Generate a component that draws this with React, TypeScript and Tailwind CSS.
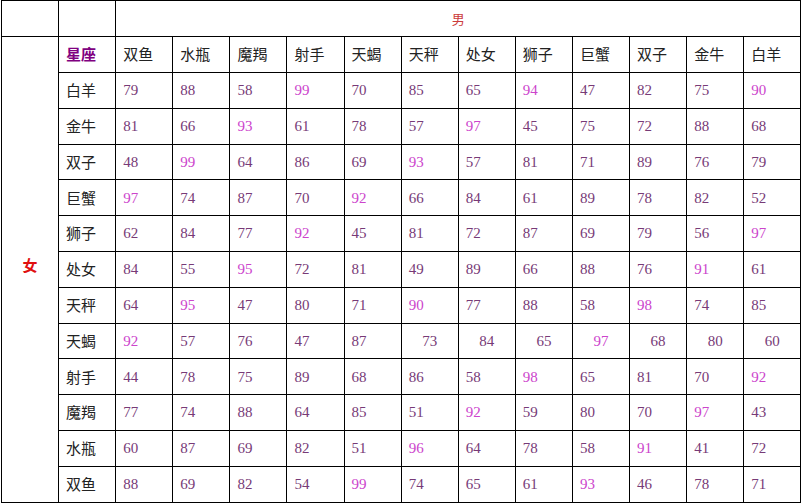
import React from "react";

const signs = ["白羊", "金牛", "双子", "巨蟹", "狮子", "处女", "天秤", "天蝎", "射手", "魔羯", "水瓶", "双鱼"];
const males = ["双鱼", "水瓶", "魔羯", "射手", "天蝎", "天秤", "处女", "狮子", "巨蟹", "双子", "金牛", "白羊"];

const data: number[][] = [
  [79, 88, 58, 99, 70, 85, 65, 94, 47, 82, 75, 90],
  [81, 66, 93, 61, 78, 57, 97, 45, 75, 72, 88, 68],
  [48, 99, 64, 86, 69, 93, 57, 81, 71, 89, 76, 79],
  [97, 74, 87, 70, 92, 66, 84, 61, 89, 78, 82, 52],
  [62, 84, 77, 92, 45, 81, 72, 87, 69, 79, 56, 97],
  [84, 55, 95, 72, 81, 49, 89, 66, 88, 76, 91, 61],
  [64, 95, 47, 80, 71, 90, 77, 88, 58, 98, 74, 85],
  [92, 57, 76, 47, 87, 73, 84, 65, 97, 68, 80, 60],
  [44, 78, 75, 89, 68, 86, 58, 98, 65, 81, 70, 92],
  [77, 74, 88, 64, 85, 51, 92, 59, 80, 70, 97, 43],
  [60, 87, 69, 82, 51, 96, 64, 78, 58, 91, 41, 72],
  [88, 69, 82, 54, 99, 74, 65, 61, 93, 46, 78, 71],
];

const cell = "border border-black p-0";

export default function App() {
  return (
    <div className="w-[802px] h-[504px] bg-white overflow-hidden font-['Liberation_Serif','Noto_Sans_CJK_SC',serif]">
      <table className="table-fixed border-collapse w-[800px] ml-[1px]">
        <colgroup>
          {Array.from({ length: 14 }).map((_, i) => (
            <col key={i} className="w-[57.1px]" />
          ))}
        </colgroup>
        <tbody>
          <tr className="h-[36px]">
            <td className={cell}></td>
            <td className={cell}></td>
            <td colSpan={12} className={`${cell} text-center text-[13px] text-[#cc3b3b] font-['Noto_Sans_CJK_SC',sans-serif]`}>
              男
            </td>
          </tr>
          <tr className="h-[36px]">
            <td rowSpan={13} className={`${cell} text-center align-middle`}>
              <span className="text-[15px] font-bold text-[#e01010] font-['Noto_Sans_CJK_SC',sans-serif] relative top-[-3px]">女</span>
            </td>
            <td className={`${cell} pl-[7px] text-[15px] font-bold text-[#800080] font-['Noto_Sans_CJK_SC',sans-serif]`}>
              星座
            </td>
            {males.map((m) => (
              <td key={m} className={`${cell} pl-[7px] text-[15px] text-[#222] font-['Noto_Sans_CJK_SC',sans-serif]`}>
                {m}
              </td>
            ))}
          </tr>
          {signs.map((s, r) => (
            <tr key={s} className="h-[35.8px]">
              <td className={`${cell} pl-[7px] text-[15px] text-[#222] font-['Noto_Sans_CJK_SC',sans-serif]`}>{s}</td>
              {data[r].map((v, c) => {
                const centered = r === 7 && c >= 5;
                const color = v >= 90 ? "text-[#cc44cc]" : "text-[#773a77]";
                return (
                  <td
                    key={c}
                    className={`${cell} text-[15px] ${color} ${centered ? "text-center" : "pl-[7px]"}`}
                  >
                    {v}
                  </td>
                );
              })}
            </tr>
          ))}
        </tbody>
      </table>
    </div>
  );
}
